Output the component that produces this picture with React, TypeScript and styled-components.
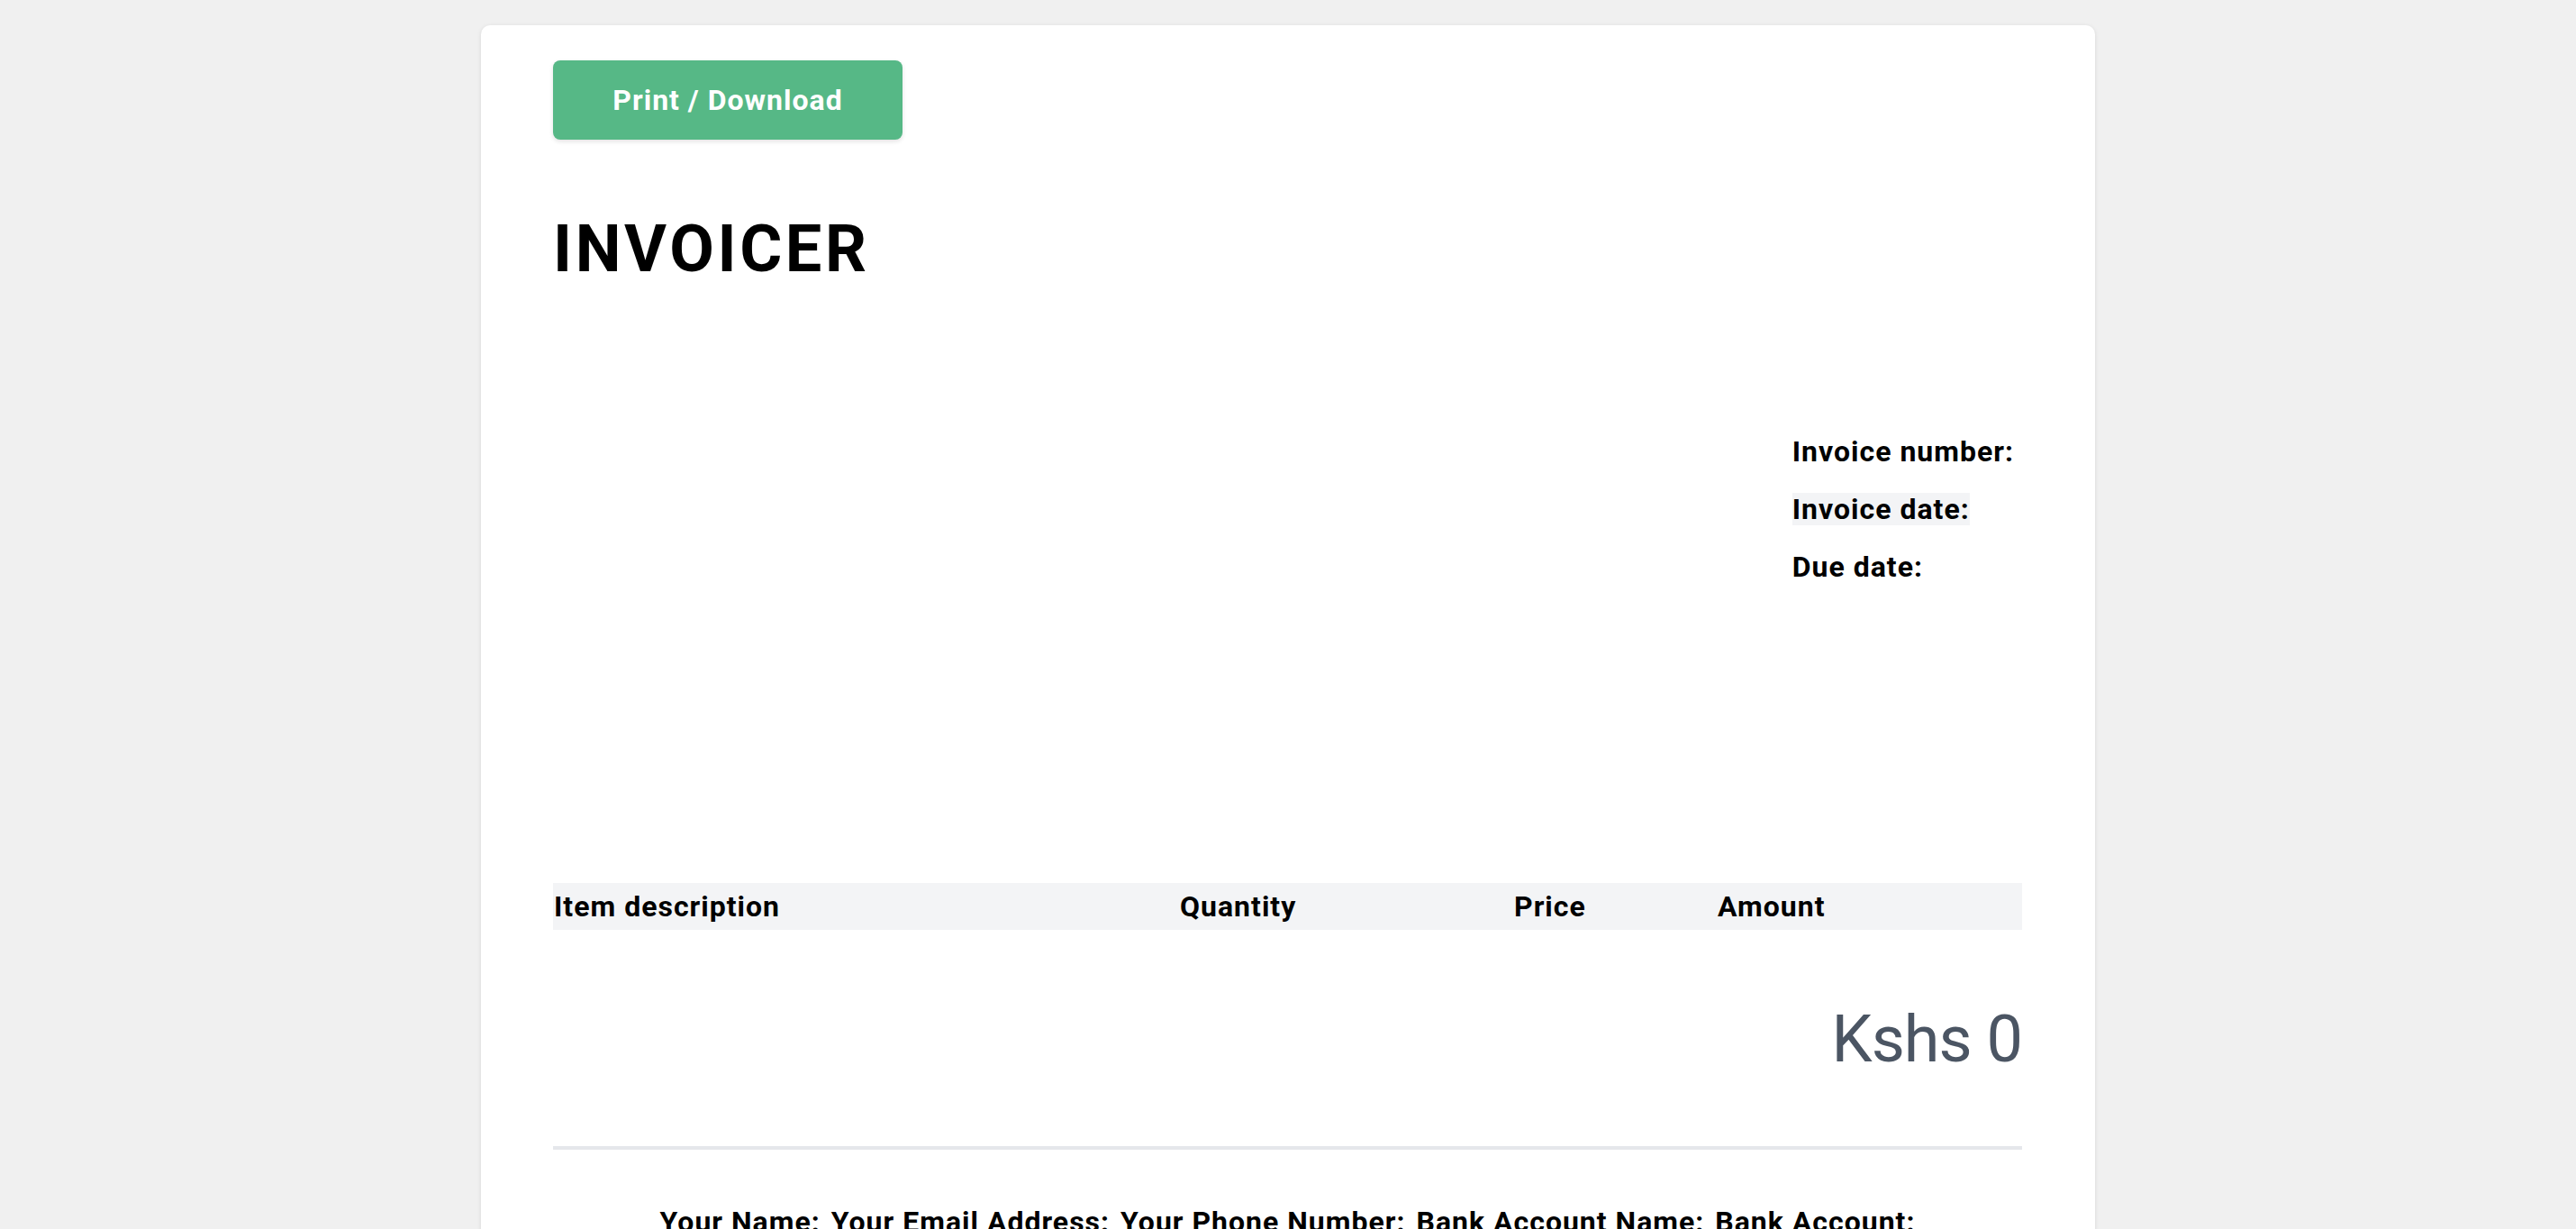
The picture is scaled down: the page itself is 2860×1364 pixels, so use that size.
import React from "react";
import styled, { createGlobalStyle } from "styled-components";

const GlobalStyle = createGlobalStyle`
  html, body {
    margin: 0;
    padding: 0;
    background: #f0f0f0;
    font-family: Roboto, "Liberation Sans", Arial, sans-serif;
    color: #000;
  }
  * { box-sizing: border-box; }
`;

const Page = styled.div`
  display: flex;
  justify-content: center;
  padding-top: 28px;
  min-height: 1364px;
`;

const Card = styled.main`
  width: 1792px;
  background: #ffffff;
  border-radius: 10px;
  box-shadow: 0 1px 5px rgba(0, 0, 0, 0.1);
  padding: 39px 81px 120px 80px;
  display: flex;
  flex-direction: column;
`;

const PrintButton = styled.button`
  align-self: flex-start;
  width: 388px;
  height: 88px;
  border: none;
  border-radius: 8px;
  background: #56b886;
  color: #ffffff;
  font-family: Roboto, "Liberation Sans", Arial, sans-serif;
  font-size: 32px;
  font-weight: 700;
  letter-spacing: 1px;
  box-shadow: 0 2px 5px rgba(0, 0, 0, 0.12);
  cursor: pointer;
`;

const Title = styled.h1`
  margin: 86px 0 0;
  font-size: 72px;
  line-height: 72px;
  font-weight: 700;
  letter-spacing: 3.6px;
`;

const Meta = styled.ul`
  list-style: none;
  margin: 170px 9px 0 0;
  padding: 0;
  align-self: flex-end;
  display: flex;
  flex-direction: column;
  align-items: flex-start;
  gap: 28px;
`;

const MetaLabel = styled.li<{ $active?: boolean }>`
  font-size: 32px;
  line-height: 36px;
  font-weight: 700;
  letter-spacing: 1px;
  background: ${(p) => (p.$active ? "#f3f4f6" : "transparent")};
`;

const TableHead = styled.div`
  margin-top: 333px;
  display: grid;
  grid-template-columns: 695px 371px 226px 1fr;
  height: 52px;
  background: #f3f4f6;
`;

const HeadCell = styled.div`
  font-size: 32px;
  line-height: 52px;
  font-weight: 700;
  letter-spacing: 1px;
  padding-left: 1px;
`;

const Total = styled.div`
  margin-top: 86px;
  text-align: right;
  font-size: 72px;
  line-height: 72px;
  font-weight: 400;
  letter-spacing: -1px;
  color: #4b5563;
`;

const Divider = styled.hr`
  margin: 82px 0 0;
  border: none;
  height: 4px;
  background: #e5e7eb;
`;

const Footer = styled.div`
  margin-top: 62px;
  display: flex;
  justify-content: center;
  gap: 12px;
`;

const FooterItem = styled.span`
  font-size: 32px;
  line-height: 36px;
  font-weight: 700;
  letter-spacing: 1px;
`;

const headers = ["Item description", "Quantity", "Price", "Amount"];
const footerItems = [
  "Your Name:",
  "Your Email Address:",
  "Your Phone Number:",
  "Bank Account Name:",
  "Bank Account:",
];

export default function App() {
  return (
    <>
      <GlobalStyle />
      <Page>
        <Card>
          <PrintButton>Print / Download</PrintButton>
          <Title>INVOICER</Title>
          <Meta>
            <MetaLabel>Invoice number:</MetaLabel>
            <MetaLabel $active>Invoice date:</MetaLabel>
            <MetaLabel>Due date:</MetaLabel>
          </Meta>
          <TableHead>
            {headers.map((h) => (
              <HeadCell key={h}>{h}</HeadCell>
            ))}
          </TableHead>
          <Total>Kshs 0</Total>
          <Divider />
          <Footer>
            {footerItems.map((f) => (
              <FooterItem key={f}>{f}</FooterItem>
            ))}
          </Footer>
        </Card>
      </Page>
    </>
  );
}
